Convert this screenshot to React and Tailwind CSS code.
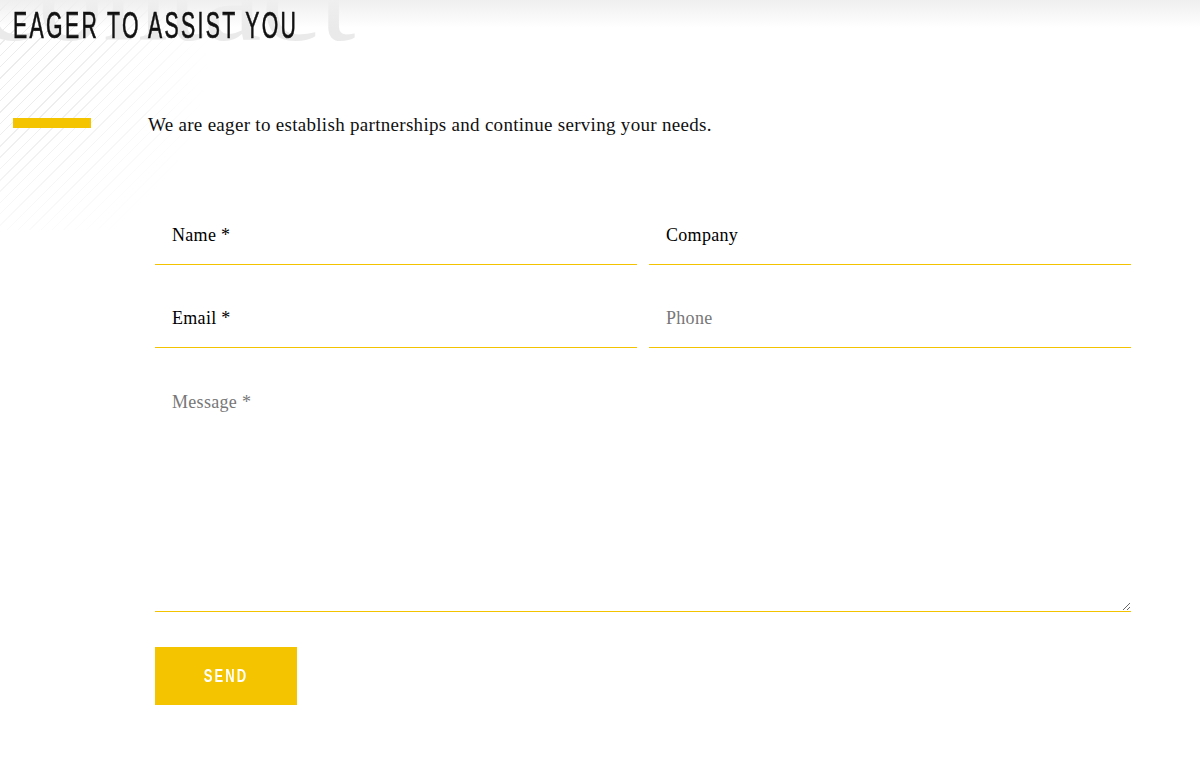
export default function App() {
  const field =
    "h-[58px] w-full border-b border-[#f3c300] bg-transparent px-[17px] text-[18px] tracking-[0.3px] outline-none";

  return (
    <div className="relative min-h-[769px] overflow-hidden bg-white font-['Liberation_Serif',serif] text-black">
      {/* diagonal stripe pattern, top left */}
      <div className="pointer-events-none absolute left-0 top-0 h-[230px] w-[220px] bg-[repeating-linear-gradient(135deg,transparent_0px,transparent_7px,#ececec_7px,#ececec_8px)] [mask-image:radial-gradient(circle_at_0%_25%,black_20%,transparent_75%)]" />
      {/* watermark word */}
      <div className="pointer-events-none absolute left-[-20px] top-[-69px] select-none font-['Liberation_Serif',serif] text-[130px] leading-none text-[#eaeaea]">
        contact
      </div>
      {/* top shade */}
      <div className="pointer-events-none absolute inset-x-0 top-0 h-[28px] bg-gradient-to-b from-[#efefef] to-transparent" />

      <div className="relative">
        <h1 className="pl-[13px] pt-[5px] font-['Liberation_Sans',sans-serif] text-[36px] font-normal leading-[42px] text-[#111]">
          <span className="inline-block origin-left scale-x-[0.59] whitespace-nowrap tracking-[4px] [-webkit-text-stroke:0.6px_#111]">
            EAGER TO ASSIST YOU
          </span>
        </h1>

        <div className="mt-[68px] flex items-start">
          <div className="ml-[13px] mt-[3px] h-[10px] w-[78px] bg-[#f5c400]" />
          <p className="ml-[57px] text-[19px] leading-[20px] tracking-[0.3px] text-[#111]">
            We are eager to establish partnerships and continue serving your needs.
          </p>
        </div>

        <form className="ml-[155px] mt-[72px] w-[976px]" onSubmit={(e) => e.preventDefault()}>
          <div className="grid grid-cols-2 gap-x-[12px] gap-y-[25px]">
            <input className={`${field} placeholder:text-black`} placeholder="Name *" />
            <input className={`${field} placeholder:text-black`} placeholder="Company" />
            <input className={`${field} placeholder:text-black`} placeholder="Email *" />
            <input className={`${field} placeholder:text-[#777]`} placeholder="Phone" />
          </div>
          <textarea
            className="mt-[25px] block h-[239px] w-full border-b border-[#f3c300] bg-transparent px-[17px] pt-[19px] text-[18px] leading-[20px] tracking-[0.3px] outline-none placeholder:text-[#777]"
            placeholder="Message *"
          />
          <button
            type="submit"
            className="mt-[35px] flex h-[58px] w-[142px] items-center justify-center bg-[#f5c400] font-['Liberation_Sans',sans-serif] text-[18px] font-bold text-white"
          >
            <span className="inline-block scale-x-[0.72] tracking-[3px]">SEND</span>
          </button>
        </form>
      </div>
    </div>
  );
}
